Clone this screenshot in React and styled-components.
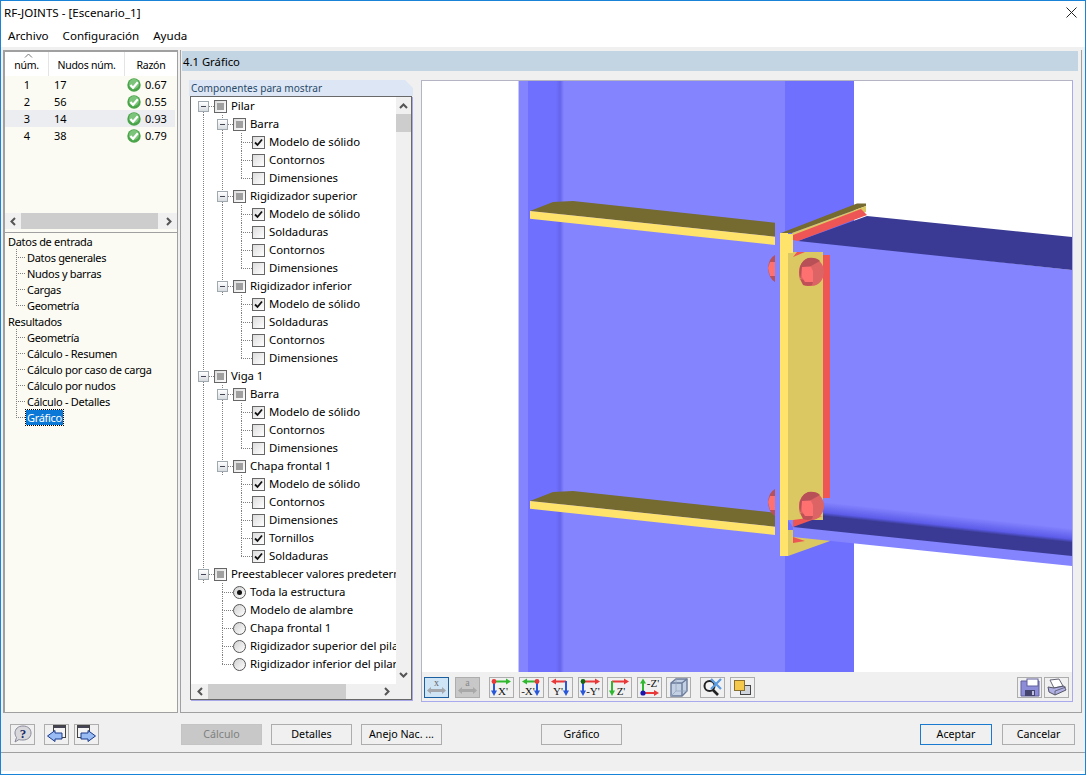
import React from 'react';
import styled, { createGlobalStyle } from 'styled-components';

const GlobalStyle = createGlobalStyle`
  html, body { margin: 0; padding: 0; background: #fff; }
  body { font-family: "Noto Sans", "Open Sans", sans-serif; font-size: 11px; color: #000; overflow: hidden; }
`;

const Window = styled.div`
  width: 1086px;
  height: 775px;
  box-sizing: border-box;
  border: 1px solid #1883d7;
  background: #fff;
  display: flex;
  flex-direction: column;
`;

const TitleBar = styled.div`
  height: 23px;
  flex: none;
  display: flex;
  align-items: center;
  justify-content: space-between;
  padding: 0 8px 0 3px;
  font-size: 11.6px;
`;

const MenuBar = styled.div`
  height: 23px;
  flex: none;
  display: flex;
  align-items: center;
  gap: 14px;
  padding-left: 7px;
  font-size: 11.6px;
`;

const Main = styled.div`
  flex: 1;
  min-height: 0;
  display: flex;
  gap: 2px;
  padding: 3px 3px 1px 2px;
  background: #f0f0f0;
`;

const LeftPanel = styled.div`
  width: 175px;
  flex: none;
  box-sizing: border-box;
  border: 1px solid #a0a0a0;
  border-width: 2px 1px 1px 2px;
  background: #fbfbf3;
  display: flex;
  flex-direction: column;
`;

const Table = styled.div`
  height: 161px;
  flex: none;
`;

const TableHead = styled.div`
  height: 24px;
  display: grid;
  grid-template-columns: 44px 76px 1fr;
  background: #fff;
`;

const HeadCell = styled.div`
  position: relative;
  display: flex;
  align-items: center;
  justify-content: center;
  padding-top: 1px;
  box-sizing: border-box;
  font-size: 10.5px;
  letter-spacing: -0.25px;
  border-right: ${(p) => (p.$last ? 'none' : '1px solid #e4e4e4')};
`;

const SortCaret = styled.svg`
  position: absolute;
  left: 19px;
  top: 1px;
`;

const TableRow = styled.div`
  height: 17px;
  display: grid;
  grid-template-columns: 44px 76px 1fr;
  align-items: center;
  margin-right: 2px;
  background: ${(p) => (p.$active ? '#ecedf0' : 'transparent')};
`;

const NumCell = styled.div`
  text-align: center;
`;

const NodeCell = styled.div`
  padding-left: 5px;
`;

const RatioCell = styled.div`
  display: flex;
  align-items: center;
  gap: 4px;
  padding-left: 2px;
`;

const HScroll = styled.div`
  height: 16px;
  flex: none;
  display: flex;
  align-items: center;
  justify-content: space-between;
  background: #f0f0f0;
  box-sizing: border-box;
  padding: 0 4px;
`;

const HThumb = styled.div`
  height: 100%;
  background: #cdcdcd;
  width: ${(p) => p.$w}px;
  margin-left: ${(p) => p.$ml}px;
  margin-right: auto;
`;

const NavDivider = styled.div`
  height: 1px;
  flex: none;
  margin-top: 3px;
  background: #a0a0a0;
`;

const NavTree = styled.div`
  padding-left: 2px;
  letter-spacing: -0.3px;
`;

const NavRow = styled.div`
  height: 16px;
  display: flex;
  align-items: center;
`;

const NavGuide = styled.div`
  width: 19px;
  height: 16px;
  flex: none;
  margin-left: 4px;
  margin-right: -4px;
  background-image:
    repeating-linear-gradient(to bottom, #808080 0 1px, transparent 1px 2px),
    repeating-linear-gradient(to right, #808080 0 1px, transparent 1px 2px);
  background-size: 1px ${(p) => (p.$last ? '8px' : '16px')}, 10px 1px;
  background-position: 5px 0, 5px 8px;
  background-repeat: no-repeat;
`;

const NavLabel = styled.span`
  padding: 0 1px;
  line-height: 15px;
  ${(p) =>
    p.$selected &&
    `
    background: #0a78d7;
    color: #fff;
    outline: 1px dotted #000;
  `}
`;

const RightPanel = styled.div`
  flex: 1;
  min-width: 0;
  box-sizing: border-box;
  border: 1px solid #a0a0a0;
  border-width: 0 1px 1px 1px;
  display: flex;
  flex-direction: column;
`;

const PanelTitle = styled.div`
  height: 20px;
  flex: none;
  margin: 1px 3px 0 1px;
  padding-left: 1px;
  display: flex;
  align-items: center;
  background: #c3d4e2;
  font-size: 11.3px;
`;

const PanelBody = styled.div`
  flex: 1;
  min-height: 0;
  display: flex;
  gap: 8px;
  padding: 9px 8px;
`;

const Group = styled.div`
  width: 224px;
  flex: none;
  display: flex;
  flex-direction: column;
`;

const GroupTitle = styled.div`
  height: 16px;
  flex: none;
  display: flex;
  align-items: center;
  padding-left: 2px;
  font-size: 10.1px;
  color: #2a4a6a;
  background: #dce6f4;
  clip-path: polygon(0 0, calc(100% - 8px) 0, 100% 8px, 100% 100%, 0 100%);
`;

const TreeBox = styled.div`
  width: 222px;
  height: 604px;
  flex: none;
  box-sizing: border-box;
  margin-left: 1px;
  border: 1px solid #696969;
  box-shadow: 1px 1px 0 #a8a8e8;
  background: #f0f0f0;
  display: grid;
  grid-template-columns: 1fr 15px;
  grid-template-rows: 1fr 15px;
`;

const TreeArea = styled.div`
  overflow: hidden;
  background: #fff;
  padding-left: 7px;
`;

const TreeRow = styled.div`
  height: 18px;
  display: flex;
  align-items: center;
  white-space: nowrap;
`;

const Guide = styled.div`
  width: 19px;
  height: 18px;
  flex: none;
  ${(p) =>
    p.$line &&
    `
    background-image: repeating-linear-gradient(to bottom, #808080 0 1px, transparent 1px 2px);
    background-size: 1px 18px;
    background-position: 5px 0;
    background-repeat: no-repeat;
  `}
`;

const Branch = styled.div`
  width: 16px;
  height: 18px;
  flex: none;
  position: relative;
  background-image:
    repeating-linear-gradient(to bottom, #808080 0 1px, transparent 1px 2px),
    repeating-linear-gradient(to bottom, #808080 0 1px, transparent 1px 2px),
    repeating-linear-gradient(to right, #808080 0 1px, transparent 1px 2px);
  background-size: 1px ${(p) => (p.$top ? '9px' : '0')}, 1px ${(p) => (p.$bottom ? '9px' : '0')}, 11px 1px;
  background-position: 5px 0, 5px 9px, 5px 9px;
  background-repeat: no-repeat;
`;

const Expander = styled.div`
  position: absolute;
  left: 0;
  top: 4px;
  width: 11px;
  height: 11px;
  box-sizing: border-box;
  border: 1px solid #a0a8b0;
  background: linear-gradient(#fff, #d8dce0);
  &::after {
    content: '';
    position: absolute;
    left: 2px;
    top: 4px;
    width: 5px;
    height: 1px;
    background: #445;
  }
`;

const Check = styled.div`
  width: 13px;
  height: 13px;
  flex: none;
  box-sizing: border-box;
  border: 1px solid #666;
  background: linear-gradient(135deg, #dcdcdc, #ffffff);
  display: flex;
  align-items: center;
  justify-content: center;
`;

const Partial = styled.div`
  width: 7px;
  height: 7px;
  background: #a0a0a0;
`;

const Radio = styled.div`
  width: 13px;
  height: 13px;
  flex: none;
  box-sizing: border-box;
  border: 1px solid #555;
  border-radius: 50%;
  background: linear-gradient(135deg, #d0d0d0, #ffffff);
  display: flex;
  align-items: center;
  justify-content: center;
`;

const RadioDot = styled.div`
  width: 5px;
  height: 5px;
  border-radius: 50%;
  background: #111;
`;

const TreeLabel = styled.span`
  margin: 0 0 2px 4px;
  font-size: 11.4px;
  letter-spacing: -0.06px;
`;

const VScroll = styled.div`
  display: flex;
  flex-direction: column;
  align-items: center;
  justify-content: space-between;
  padding: 5px 0;
  box-sizing: border-box;
`;

const VThumb = styled.div`
  width: 15px;
  height: 18px;
  margin-top: 3px;
  margin-bottom: auto;
  background: #cdcdcd;
`;

const TreeHScroll = styled(HScroll)`
  height: 15px;
  padding: 0 5px;
`;

const Corner = styled.div`
  background: #f0f0f0;
`;

const Viewport = styled.div`
  flex: 1;
  min-width: 0;
  display: flex;
  flex-direction: column;
  box-sizing: border-box;
  height: 622px;
  border: 1px solid #a9a9ee;
  border-top-color: #b4b4c4;
  border-left-color: #b4b4c4;
`;

const Scene = styled.svg`
  display: block;
  flex: none;
`;

const ViewToolbar = styled.div`
  flex: 1;
  display: flex;
  align-items: center;
  padding: 1px 3px 0 2px;
  gap: 9px;
`;

const ToolGroup = styled.div`
  display: flex;
  gap: ${(p) => p.$gap || 5}px;
`;

const ToolBtn = styled.div`
  width: 25px;
  height: 21px;
  flex: none;
  box-sizing: border-box;
  display: flex;
  align-items: center;
  justify-content: center;
  border: 1px solid ${(p) => (p.$active ? '#1a5fa0' : '#adadad')};
  background: ${(p) => (p.$active ? '#cfe4f5' : p.$disabled ? '#c8c8c8' : '#f0f0f0')};
`;

const ToolSpacer = styled.div`
  flex: 1;
`;

const Footer = styled.div`
  height: 39px;
  flex: none;
  display: flex;
  align-items: center;
  box-sizing: border-box;
  padding: 2px 10px 0 9px;
  background: #f0f0f0;
  border-bottom: 1px solid #a0a0a0;
`;

const FootIcons = styled.div`
  display: flex;
  gap: 5px;
  margin-right: 82px;
`;

const HelpBtn = styled(ToolBtn)`
  margin-right: 4px;
`;

const FootBtn = styled.div`
  width: ${(p) => p.$w || 81}px;
  height: 21px;
  flex: none;
  box-sizing: border-box;
  margin-right: ${(p) => p.$mr ?? 9}px;
  display: flex;
  align-items: center;
  justify-content: center;
  border: 1px solid ${(p) => (p.$primary ? '#1a7ad0' : p.$disabled ? '#c4c4c4' : '#adadad')};
  background: ${(p) => (p.$disabled ? '#c8c8c8' : '#f0f0f0')};
  color: ${(p) => (p.$disabled ? '#808080' : '#000')};
  font-size: 10.7px;
`;

const FootSpacer = styled.div`
  flex: 1;
`;

const StatusBar = styled.div`
  height: 18px;
  flex: none;
  background: #f0f0f0;
  margin-bottom: 3px;
`;

const rows = [
  { n: 1, node: 17, ratio: '0.67' },
  { n: 2, node: 56, ratio: '0.55' },
  { n: 3, node: 14, ratio: '0.93', active: true },
  { n: 4, node: 38, ratio: '0.79' },
];

const nav = [
  { label: 'Datos de entrada', items: ['Datos generales', 'Nudos y barras', 'Cargas', 'Geometría'] },
  {
    label: 'Resultados',
    items: ['Geometría', 'Cálculo - Resumen', 'Cálculo por caso de carga', 'Cálculo por nudos', 'Cálculo - Detalles', 'Gráfico'],
  },
];

const c = (label, on) => ({ label, type: on ? 'on' : 'off' });
const tree = [
  {
    label: 'Pilar',
    children: [
      { label: 'Barra', children: [c('Modelo de sólido', 1), c('Contornos'), c('Dimensiones')] },
      { label: 'Rigidizador superior', children: [c('Modelo de sólido', 1), c('Soldaduras'), c('Contornos'), c('Dimensiones')] },
      { label: 'Rigidizador inferior', children: [c('Modelo de sólido', 1), c('Soldaduras'), c('Contornos'), c('Dimensiones')] },
    ],
  },
  {
    label: 'Viga 1',
    children: [
      { label: 'Barra', children: [c('Modelo de sólido', 1), c('Contornos'), c('Dimensiones')] },
      {
        label: 'Chapa frontal 1',
        children: [c('Modelo de sólido', 1), c('Contornos'), c('Dimensiones'), c('Tornillos', 1), c('Soldaduras', 1)],
      },
    ],
  },
  {
    label: 'Preestablecer valores predeterminados',
    children: [
      { label: 'Toda la estructura', type: 'radioOn' },
      { label: 'Modelo de alambre', type: 'radio' },
      { label: 'Chapa frontal 1', type: 'radio' },
      { label: 'Rigidizador superior del pilar', type: 'radio' },
      { label: 'Rigidizador inferior del pilar', type: 'radio' },
    ],
  },
];

function flatten(nodes, guides = [], out = []) {
  nodes.forEach((node, i) => {
    const last = i === nodes.length - 1;
    out.push({ ...node, guides, last, first: guides.length === 0 && i === 0 });
    if (node.children) flatten(node.children, [...guides, !last], out);
  });
  return out;
}

const Chevron = ({ dir }) => {
  const d = {
    up: 'M1 6 L4.5 2.5 L8 6',
    down: 'M1 3 L4.5 6.5 L8 3',
    left: 'M6 1 L2.5 4.5 L6 8',
    right: 'M3 1 L6.5 4.5 L3 8',
  }[dir];
  return (
    <svg width="9" height="9" viewBox="0 0 9 9" style={{ flex: 'none' }}>
      <path d={d} fill="none" stroke="#555" strokeWidth="2" />
    </svg>
  );
};

const CheckMark = () => (
  <svg width="9" height="9" viewBox="0 0 9 9">
    <path d="M1 4.5 L3.5 7 L8 1.5" fill="none" stroke="#111" strokeWidth="1.8" />
  </svg>
);

const OkIcon = () => (
  <svg width="14" height="14" viewBox="0 0 14 14" style={{ flex: 'none' }}>
    <circle cx="7" cy="7" r="6.7" fill="#4aa54a" />
    <circle cx="7" cy="6" r="5" fill="#7cc47c" />
    <path d="M3.4 7 L6 9.8 L10.8 4.2" fill="none" stroke="#fff" strokeWidth="2.2" />
  </svg>
);

const DimIcon = ({ letter, color, text }) => (
  <svg width="21" height="18" viewBox="0 0 21 18">
    <text x="10.5" y="7.5" textAnchor="middle" fontSize="10" fontFamily="Liberation Serif, serif" fill={text}>{letter}</text>
    <path d="M3 12.5 H18" stroke={color} strokeWidth="3" />
    <path d="M1 12.5 L5 9 V16 Z M20 12.5 L16 9 V16 Z" fill={color} />
  </svg>
);

const RED = '#e83838';
const GREEN = '#2fb82f';
const BLUE = '#2858d8';

// ejes: flecha horizontal, flecha vertical y el punto de origen
const AxisIcon = ({ label, h, v, right, dot, lx = 13, ly = 17 }) => (
  <svg width="23" height="19" viewBox="0 0 23 19">
    {right ? (
      <>
        <path d="M5 3.5 H17" stroke={h} strokeWidth="2" />
        <path d="M2 3.5 L7 0.5 V6.5 Z" fill={h} />
        <path d="M17 3 V15" stroke={v} strokeWidth="2" />
        <path d="M17 18 L14 12.5 H20 Z" fill={v} />
      </>
    ) : (
      <>
        <path d="M4 3.5 H17" stroke={h} strokeWidth="2" />
        <path d="M21 3.5 L16 0.5 V6.5 Z" fill={h} />
        <path d="M4 3 V15" stroke={v} strokeWidth="2" />
        <path d="M4 18 L1 12.5 H7 Z" fill={v} />
      </>
    )}
    {dot && <circle cx={right ? 17 : 4} cy="3.5" r="2.4" fill={dot} />}
    <text x={lx} y={ly} textAnchor="middle" fontSize="11" fontFamily="Liberation Serif, serif" fill="#111">{label}</text>
  </svg>
);

const ZAxisIcon = () => (
  <svg width="23" height="19" viewBox="0 0 23 19">
    <path d="M5 15 V4" stroke={GREEN} strokeWidth="2" />
    <path d="M5 0.5 L2 5.5 H8 Z" fill={GREEN} />
    <path d="M5 15 H18" stroke={RED} strokeWidth="2" />
    <path d="M21 15 L16 12 V18 Z" fill={RED} />
    <circle cx="5" cy="15" r="2.6" fill="#1818b0" />
    <text x="15" y="9" textAnchor="middle" fontSize="11" fontFamily="Liberation Serif, serif" fill="#111">-Z'</text>
  </svg>
);

const CubeIcon = () => (
  <svg width="20" height="19" viewBox="0 0 20 19">
    <path d="M2 5 L7 1 H18 V13 L13 18 H2 Z" fill="#c4d0e4" stroke="#6a7a98" strokeWidth="1.4" />
    <path d="M2 5 H13 V18 M13 5 L18 1" fill="none" stroke="#6a7a98" strokeWidth="1.4" />
    <path d="M7 1 V13 H18 M7 13 L2 18" fill="none" stroke="#98a6be" strokeWidth="0.8" />
  </svg>
);

const ZoomIcon = () => (
  <svg width="21" height="19" viewBox="0 0 21 19">
    <circle cx="7.5" cy="8" r="5" fill="#f4f4f4" stroke="#222" strokeWidth="2" />
    <path d="M11 12 L16 17" stroke="#222" strokeWidth="2.6" />
    <path d="M9 1 L19 11 M19 1 L9 11" stroke="#5a9ae0" strokeWidth="2.2" />
  </svg>
);

const CopyIcon = () => (
  <svg width="19" height="18" viewBox="0 0 19 18">
    <rect x="7.5" y="7.5" width="10" height="9" fill="#d0d4dc" stroke="#444" />
    <rect x="1.5" y="2.5" width="10" height="10" fill="#f4c84a" stroke="#8a7030" />
  </svg>
);

const SaveIcon = () => (
  <svg width="20" height="19" viewBox="0 0 20 19">
    <path d="M1 3 H19 V18 H1 Z" fill="#8c8cd8" stroke="#60609c" />
    <rect x="7" y="1" width="11" height="7" fill="#fff" stroke="#60609c" />
    <rect x="5" y="12" width="10" height="6" fill="#44446c" />
    <rect x="12" y="13" width="2" height="4" fill="#c0c0e0" />
  </svg>
);

const PrintIcon = () => (
  <svg width="21" height="19" viewBox="0 0 21 19">
    <path d="M4 2 L13 1 L17 8 L8 10 Z" fill="#fff" stroke="#667" />
    <path d="M2 9 L8 10 L18 8 L20 12 L9 17 L3 14 Z" fill="#b0b0e4" stroke="#556" />
    <path d="M9 17 L9 13 L20 9" fill="none" stroke="#556" strokeWidth="0.8" />
  </svg>
);

const HelpIcon = () => (
  <svg width="20" height="18" viewBox="0 0 20 18">
    <path d="M10 1 C15 1 18 4 18 8 C18 12 15 15 10 15 C8 15 7 15 6 14.5 L2 17 L3.5 12.5 C2.5 11 2 9.5 2 8 C2 4 5 1 10 1 Z" fill="#d8d8dc" stroke="#889" />
    <text x="10" y="13" textAnchor="middle" fontSize="13" fontWeight="700" fontFamily="Liberation Serif, serif" fill="#1a2a6a">?</text>
  </svg>
);

const WinArrowIcon = ({ right }) => (
  <svg width="21" height="18" viewBox="0 0 21 18">
    <rect x={right ? 1.5 : 7.5} y="0.5" width="12" height="12" fill="#f4f4f4" stroke="#444" />
    <rect x={right ? 2 : 8} y="1" width="11" height="2" fill="#445" />
    <path
      d={right ? 'M5 8 H12 V5.5 L19.5 11 L12 16.5 V14 H5 Z' : 'M16 8 H9 V5.5 L1.5 11 L9 16.5 V14 H16 Z'}
      fill="#9abcf4"
      stroke="#1a3a8a"
    />
  </svg>
);

const CloseIcon = () => (
  <svg width="11" height="11" viewBox="0 0 11 11">
    <path d="M0.5 0.5 L10.5 10.5 M10.5 0.5 L0.5 10.5" stroke="#222" strokeWidth="1" />
  </svg>
);

const Bolt = ({ dy }) => (
  <g transform={`translate(0 ${dy})`}>
    <path d="M775 255 Q769 258 768 268 Q769 279 775 282 Z" fill="#b85058" />
    <path d="M775 262 L770 262 L768 268 L770 276 L775 276 Z" fill="#ff7070" />
    <ellipse cx="811.5" cy="272" rx="12.5" ry="14" fill="#dc6464" />
    <path d="M800 280 Q797 262 808 258 Q816 257 820 261 L811 266 L802 267 Z" fill="#b85058" />
    <path d="M800 279 L803 285 Q808 287 812 285 L813 282 Z" fill="#c05058" />
    <path d="M802 267 L811 267 L813 271 L813 282 L805 282 L802 277 Z" fill="#ff7070" />
  </g>
);

const SceneDrawing = () => (
  <Scene width="650" height="591" viewBox="422 81 650 591">
    <defs>
      <linearGradient id="band" x1="0" x2="1" y1="0" y2="0">
        <stop offset="0" stopColor="#7070ff" />
        <stop offset="0.5" stopColor="#6464ec" />
        <stop offset="1" stopColor="#8484ff" />
      </linearGradient>
      <linearGradient id="fillet" gradientUnits="userSpaceOnUse" x1="937" y1="514" x2="935.5" y2="528">
        <stop offset="0" stopColor="#8484ff" />
        <stop offset="0.75" stopColor="#5c5cea" />
        <stop offset="1" stopColor="#3a3a94" />
      </linearGradient>
    </defs>
    <rect x="422" y="81" width="650" height="591" fill="#fff" />
    <rect x="518" y="81" width="1" height="591" fill="#c8c8f4" />
    <rect x="519" y="81" width="335" height="591" fill="#8484ff" />
    <rect x="528" y="81" width="28" height="591" fill="#7070ff" />
    <rect x="556" y="81" width="8" height="591" fill="url(#band)" />
    <rect x="785" y="81" width="69" height="591" fill="#7070ff" />

    {/* rigidizadores del pilar */}
    <path d="M530 211 L553 202 L573 201 L775 222.7 V236.7 Z" fill="#756a30" />
    <path d="M530 211 L775 236.7 V245 L530 218.7 Z" fill="#ffe36b" />
    <path d="M530 501 L553 492 L573 491 L775 512.7 V526.7 Z" fill="#756a30" />
    <path d="M530 501 L775 526.7 V535 L530 508.7 Z" fill="#ffe36b" />

    {/* parte baja de la chapa, detrás de la viga */}
    <path d="M788 530 H830 V541 L788 556 Z" fill="#dcc863" />

    {/* viga */}
    <path d="M788 238 L1072 270 V566 L793 537 V527 L788 520 Z" fill="#8484ff" />
    <path d="M798 241 L867 216 L1072 237 V270 Z" fill="#3a3a94" />
    <path d="M823 502 L1072 527 V556 L793 527 L805 517 Z" fill="url(#fillet)" />
    <path d="M793 537 L805 541 L793 543 Z" fill="#ee5555" />

    {/* chapa frontal */}
    <rect x="788" y="252" width="35" height="268" fill="#dcc863" />
    <rect x="823" y="255" width="7" height="243" fill="#ee5555" />
    <path d="M793 520 L823 516 L793 527 Z" fill="#ee5555" />
    <path d="M793 257 L797 252 L805 252 Z" fill="#ee5555" />
    <rect x="788" y="234" width="5" height="19" fill="#ffe36b" />
    <rect x="780" y="233" width="8" height="323" fill="#ffe36b" />
    <path d="M781 233 L857 203.5 L866 203.5 V206 L792 233 Z" fill="#756a30" />
    <path d="M792 233 L866 206 V212 L793 236 Z" fill="#dcc863" />
    <path d="M793 235 L861 209 L867 215 L798 241 L793 240 Z" fill="#ee5555" />

    <Bolt dy={0} />
    <Bolt dy={234} />
  </Scene>
);

export default function App() {
  const items = flatten(tree);
  return (
    <Window>
      <GlobalStyle />
      <TitleBar>
        <span>RF-JOINTS - [Escenario_1]</span>
        <CloseIcon />
      </TitleBar>
      <MenuBar>
        <span>Archivo</span>
        <span>Configuración</span>
        <span>Ayuda</span>
      </MenuBar>
      <Main>
        <LeftPanel>
          <Table>
            <TableHead>
              <HeadCell>
                <SortCaret width="9" height="5" viewBox="0 0 9 5">
                  <path d="M1 4.5 L4.5 1 L8 4.5" fill="none" stroke="#777" />
                </SortCaret>
                núm.
              </HeadCell>
              <HeadCell>Nudos núm.</HeadCell>
              <HeadCell $last>Razón</HeadCell>
            </TableHead>
            {rows.map((r) => (
              <TableRow key={r.n} $active={r.active}>
                <NumCell>{r.n}</NumCell>
                <NodeCell>{r.node}</NodeCell>
                <RatioCell>
                  <OkIcon />
                  {r.ratio}
                </RatioCell>
              </TableRow>
            ))}
          </Table>
          <HScroll>
            <Chevron dir="left" />
            <HThumb $w={137} $ml={3} />
            <Chevron dir="right" />
          </HScroll>
          <NavDivider />
          <NavTree>
            {nav.map((g) => (
              <React.Fragment key={g.label}>
                <NavRow>
                  <NavLabel>{g.label}</NavLabel>
                </NavRow>
                {g.items.map((it, i) => (
                  <NavRow key={it}>
                    <NavGuide $last={i === g.items.length - 1} />
                    <NavLabel $selected={it === 'Gráfico'}>{it}</NavLabel>
                  </NavRow>
                ))}
              </React.Fragment>
            ))}
          </NavTree>
        </LeftPanel>
        <RightPanel>
          <PanelTitle>4.1 Gráfico</PanelTitle>
          <PanelBody>
            <Group>
              <GroupTitle>Componentes para mostrar</GroupTitle>
              <TreeBox>
                <TreeArea>
                  {items.map((it, i) => (
                    <TreeRow key={i}>
                      {it.guides.map((g, j) => (
                        <Guide key={j} $line={g} />
                      ))}
                      <Branch $top={!it.first} $bottom={!it.last || !!it.children}>
                        {it.children && <Expander />}
                      </Branch>
                      {it.type === 'radio' || it.type === 'radioOn' ? (
                        <Radio>{it.type === 'radioOn' && <RadioDot />}</Radio>
                      ) : (
                        <Check>
                          {it.children && <Partial />}
                          {it.type === 'on' && <CheckMark />}
                        </Check>
                      )}
                      <TreeLabel>{it.label}</TreeLabel>
                    </TreeRow>
                  ))}
                </TreeArea>
                <VScroll>
                  <Chevron dir="up" />
                  <VThumb />
                  <Chevron dir="down" />
                </VScroll>
                <TreeHScroll>
                  <Chevron dir="left" />
                  <HThumb $w={138} $ml={3} />
                  <Chevron dir="right" />
                </TreeHScroll>
                <Corner />
              </TreeBox>
            </Group>
            <Viewport>
              <SceneDrawing />
              <ViewToolbar>
                <ToolGroup $gap={6}>
                  <ToolBtn $active><DimIcon letter="x" color="#a4a8ac" text="#666" /></ToolBtn>
                  <ToolBtn $disabled><DimIcon letter="a" color="#a8a8a8" text="#888" /></ToolBtn>
                </ToolGroup>
                <ToolGroup $gap={4.5}>
                  <ToolBtn><AxisIcon label="X'" h={GREEN} v={BLUE} dot={RED} /></ToolBtn>
                  <ToolBtn><AxisIcon label="-X'" h={GREEN} v={BLUE} right dot={RED} lx={8} /></ToolBtn>
                  <ToolBtn><AxisIcon label="Y'" h={RED} v={BLUE} right lx={9} /></ToolBtn>
                  <ToolBtn><AxisIcon label="-Y'" h={RED} v={BLUE} dot="#116611" lx={14} /></ToolBtn>
                  <ToolBtn><AxisIcon label="Z'" h={RED} v={GREEN} /></ToolBtn>
                  <ToolBtn><ZAxisIcon /></ToolBtn>
                  <ToolBtn><CubeIcon /></ToolBtn>
                </ToolGroup>
                <ToolGroup>
                  <ToolBtn><ZoomIcon /></ToolBtn>
                  <ToolBtn><CopyIcon /></ToolBtn>
                </ToolGroup>
                <ToolSpacer />
                <ToolGroup $gap={2}>
                  <ToolBtn><SaveIcon /></ToolBtn>
                  <ToolBtn><PrintIcon /></ToolBtn>
                </ToolGroup>
              </ViewToolbar>
            </Viewport>
          </PanelBody>
        </RightPanel>
      </Main>
      <Footer>
        <FootIcons>
          <HelpBtn><HelpIcon /></HelpBtn>
          <ToolBtn><WinArrowIcon /></ToolBtn>
          <ToolBtn><WinArrowIcon right /></ToolBtn>
        </FootIcons>
        <FootBtn $disabled>Cálculo</FootBtn>
        <FootBtn>Detalles</FootBtn>
        <FootBtn $mr={99}>Anejo Nac. ...</FootBtn>
        <FootBtn>Gráfico</FootBtn>
        <FootSpacer />
        <FootBtn $primary $w={72} $mr={10}>Aceptar</FootBtn>
        <FootBtn $w={73} $mr={0}>Cancelar</FootBtn>
      </Footer>
      <StatusBar />
    </Window>
  );
}
